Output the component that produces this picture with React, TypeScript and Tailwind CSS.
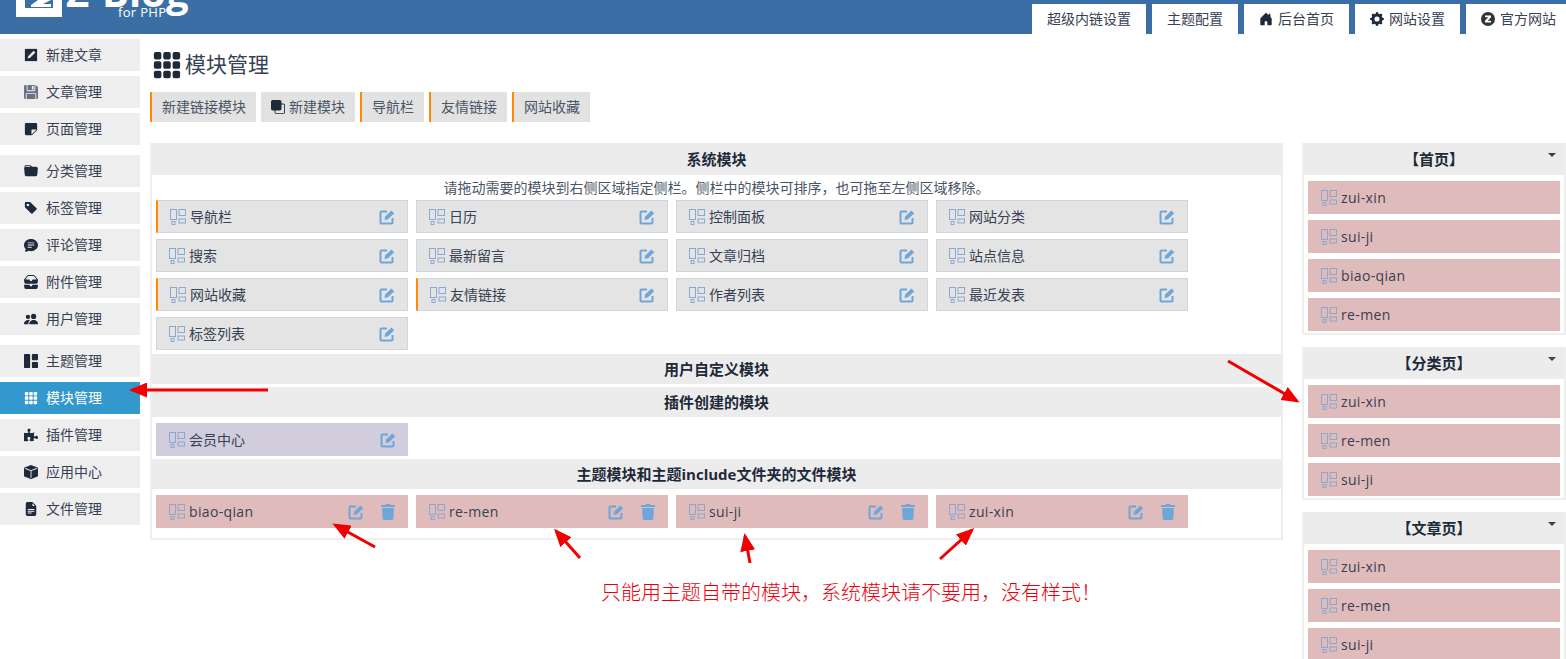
import type { ReactNode } from 'react';
import {
  BsFloppyFill,
  BsStickyFill,
  BsFolderFill,
  BsTagFill,
  BsChatTextFill,
  BsInboxesFill,
  BsPeopleFill,
  BsGrid1X2Fill,
  BsGrid3X3GapFill,
  BsBoxFill,
  BsFileEarmarkTextFill,
  BsHouseDoorFill,
  BsGearFill,
  BsFront,
} from 'react-icons/bs';
import { FaTrash, FaPuzzlePiece } from 'react-icons/fa';

const FONT = { fontFamily: '"Open Sans", "Noto Sans CJK SC", sans-serif' };

type Tone = 'sys' | 'plugin' | 'theme';

// dark square with a white slash, no package has this one
function NewPostIcon() {
  return (
    <svg viewBox="0 0 16 16" className="h-3.5 w-3.5" fill="currentColor">
      <path d="M1 1h14v14H1z" />
      <path d="M4 12l1-3 6-6 2 2-6 6z" fill="#eee" />
    </svg>
  );
}

// open square with a solid pencil
function EditIcon() {
  return (
    <svg viewBox="0 0 16 16" className="h-4 w-4 shrink-0 text-[#6ea6d9]" fill="none">
      <path d="M13.5 9v4.5a1 1 0 0 1-1 1h-10a1 1 0 0 1-1-1v-10a1 1 0 0 1 1-1H8" stroke="currentColor" strokeWidth="2" />
      <path d="M5.5 11l.7-3.4L12.4 1.4l2.8 2.8L9 10.3z" fill="currentColor" />
    </svg>
  );
}

const sideGroups: { label: string; icon: ReactNode; active?: boolean; gray?: boolean }[][] = [
  [
    { label: '新建文章', icon: <NewPostIcon /> },
    { label: '文章管理', icon: <BsFloppyFill />, gray: true },
    { label: '页面管理', icon: <BsStickyFill /> },
  ],
  [
    { label: '分类管理', icon: <BsFolderFill /> },
    { label: '标签管理', icon: <BsTagFill /> },
    { label: '评论管理', icon: <BsChatTextFill /> },
    { label: '附件管理', icon: <BsInboxesFill /> },
    { label: '用户管理', icon: <BsPeopleFill /> },
  ],
  [
    { label: '主题管理', icon: <BsGrid1X2Fill /> },
    { label: '模块管理', icon: <BsGrid3X3GapFill />, active: true },
    { label: '插件管理', icon: <FaPuzzlePiece /> },
    { label: '应用中心', icon: <BsBoxFill /> },
    { label: '文件管理', icon: <BsFileEarmarkTextFill /> },
  ],
];

const systemWidgets: { name: string; accent?: boolean }[] = [
  { name: '导航栏', accent: true },
  { name: '日历' },
  { name: '控制面板' },
  { name: '网站分类' },
  { name: '搜索' },
  { name: '最新留言' },
  { name: '文章归档' },
  { name: '站点信息' },
  { name: '网站收藏', accent: true },
  { name: '友情链接', accent: true },
  { name: '作者列表' },
  { name: '最近发表' },
  { name: '标签列表' },
];

const sidebars = [
  { title: '【首页】', items: ['zui-xin', 'sui-ji', 'biao-qian', 're-men'] },
  { title: '【分类页】', items: ['zui-xin', 're-men', 'sui-ji'] },
  { title: '【文章页】', items: ['zui-xin', 're-men', 'sui-ji'] },
];

// small layout glyph in front of every module name
function ModuleIcon() {
  return (
    <svg viewBox="0 0 16 16" className="h-4 w-4 shrink-0 text-[#8aa8d0]" fill="none" stroke="currentColor" strokeWidth="1">
      <rect x="0.5" y="0.5" width="6" height="10" />
      <rect x="2" y="12.5" width="3" height="3" />
      <rect x="9" y="0.5" width="6.5" height="6" />
      <rect x="9" y="10" width="6.5" height="4" />
    </svg>
  );
}

function Widget({ name, tone = 'sys', accent }: { name: string; tone?: Tone; accent?: boolean }) {
  const toneCls =
    tone === 'theme'
      ? 'bg-[#e0bbbb] pl-3.25 tracking-wide'
      : tone === 'plugin'
        ? 'bg-[#d2cddd] pl-3.25'
        : 'bg-[#e4e4e4] border border-gray-300 pl-3';
  return (
    <div className={`flex h-8.25 items-center pr-3 text-sm text-gray-700 ${toneCls} ${accent ? 'border-l-2 border-l-orange-400' : ''}`}>
      <ModuleIcon />
      <span className="ml-1 flex-1">{name}</span>
      <EditIcon />
      {tone === 'theme' && <FaTrash className="ml-4 text-base text-[#6ea6d9]" />}
    </div>
  );
}

function SectionTitle({ children, tall }: { children: ReactNode; tall?: boolean }) {
  return (
    <div className={`flex items-center justify-center bg-[#ececec] text-[15px] font-bold text-gray-800 ${tall ? 'h-8' : 'h-7.5'}`}>
      {children}
    </div>
  );
}

function ZLogo() {
  return (
    <svg viewBox="0 0 16 16" className="h-3.5 w-3.5">
      <circle cx="8" cy="8" r="8" fill="#333" />
      <path d="M4.5 4h7v2L7.6 10h3.9v2h-7v-2l3.9-4H4.5z" fill="#fff" />
    </svg>
  );
}

const btn = 'flex h-7.5 items-center bg-[#e2e2e2] px-2.5 text-gray-600';
const tab = 'flex h-7.5 items-center bg-white text-gray-700';

export default function App() {
  return (
    <div className="relative flex h-screen flex-col overflow-hidden bg-white text-gray-700" style={FONT}>
      {/* Header, the logo is cut by the top of the window */}
      <header className="flex h-8.5 shrink-0 items-end justify-between overflow-hidden bg-[#3a6ea5] pl-4">
        <div className="flex items-start self-stretch">
          <div className="relative h-4.25 w-11.5 bg-white">
            <svg viewBox="0 0 46 17" className="absolute inset-0 h-full w-full">
              <path d="M9 0h28v8H9z" fill="#3a6ea5" />
              <path d="M22 0h13l-8 4h8v3H15v-2z" fill="#fff" />
            </svg>
          </div>
          <div className="relative ml-1 h-8 w-32 text-white">
            <span className="absolute -top-7 left-0 text-[40px] leading-10 font-bold whitespace-nowrap">Z-Blog</span>
            <span className="absolute top-1 left-13 text-[13px] leading-4 tracking-wide whitespace-nowrap">for PHP</span>
          </div>
        </div>
        <nav className="flex gap-1.5 text-sm">
          <a className={`${tab} px-3.75`}>超级内链设置</a>
          <a className={`${tab} px-3.75`}>主题配置</a>
          <a className={`${tab} gap-1.25 px-3.75`}>
            <BsHouseDoorFill className="text-gray-800" /> 后台首页
          </a>
          <a className={`${tab} gap-1.25 px-3.75`}>
            <BsGearFill className="text-gray-800" /> 网站设置
          </a>
          <a className={`${tab} gap-1.25 pr-2.5 pl-3.75`}>
            <ZLogo /> 官方网站
          </a>
        </nav>
      </header>

      <div className="flex flex-1">
        {/* Left menu */}
        <aside className="flex w-35 shrink-0 flex-col gap-2.5 pt-1.25">
          {sideGroups.map((group, i) => (
            <div key={i} className="flex flex-col gap-1.25">
              {group.map((item) => (
                <div
                  key={item.label}
                  className={`flex h-8 items-center gap-2 pl-6 text-sm ${
                    item.active ? 'bg-[#3399cc] text-white' : 'bg-[#eeeeee] text-gray-700'
                  }`}
                >
                  <span className={`text-sm ${item.active ? 'text-white' : item.gray ? 'text-gray-500' : 'text-gray-800'}`}>{item.icon}</span>
                  {item.label}
                </div>
              ))}
            </div>
          ))}
        </aside>

        {/* Main content */}
        <main className="min-w-0 flex-1 pl-2.5">
          <h1 className="mt-3.75 flex h-8 items-center gap-0.75 pl-0.5 text-[21px] font-normal text-gray-700">
            <BsGrid3X3GapFill className="text-3xl text-gray-800" /> 模块管理
          </h1>
          <div className="mt-2.75 flex gap-1.25 text-sm">
            <span className={`${btn} border-l-2 border-l-orange-400`}>新建链接模块</span>
            <span className={`${btn} gap-1`}>
              <BsFront className="text-gray-800" /> 新建模块
            </span>
            <span className={`${btn} border-l-2 border-l-orange-400`}>导航栏</span>
            <span className={`${btn} border-l-2 border-l-orange-400`}>友情链接</span>
            <span className={`${btn} border-l-2 border-l-orange-400`}>网站收藏</span>
          </div>

          <div className="mt-5.25 flex items-start justify-between">
            {/* Widget list */}
            <section className="flex w-[1133px] flex-col border-x-2 border-b-2 border-[#eeeeee] pb-2.5">
              <SectionTitle tall>系统模块</SectionTitle>
              <p className="h-6.25 text-center text-sm leading-6.25 text-gray-600">请拖动需要的模块到右侧区域指定侧栏。侧栏中的模块可排序，也可拖至左侧区域移除。</p>
              <div className="grid grid-cols-[repeat(4,252px)] gap-x-2 gap-y-1.5 pl-1">
                {systemWidgets.map((w) => (
                  <Widget key={w.name} name={w.name} accent={w.accent} />
                ))}
              </div>
              <div className="mt-1"><SectionTitle>用户自定义模块</SectionTitle></div>
              <div className="mt-0.75"><SectionTitle>插件创建的模块</SectionTitle></div>
              <div className="grid grid-cols-[repeat(4,252px)] gap-x-2 pt-1.5 pb-0.75 pl-1">
                <Widget name="会员中心" tone="plugin" />
              </div>
              <SectionTitle>主题模块和主题include文件夹的文件模块</SectionTitle>
              <div className="grid grid-cols-[repeat(4,252px)] gap-x-2 pt-1.5 pl-1">
                {['biao-qian', 're-men', 'sui-ji', 'zui-xin'].map((n) => (
                  <Widget key={n} name={n} tone="theme" />
                ))}
              </div>
            </section>

            {/* Sidebars on the right */}
            <aside className="flex w-66 shrink-0 flex-col gap-3">
              {sidebars.map((s) => (
                <div key={s.title} className="relative border-x-2 border-b-2 border-[#eeeeee] pb-0.5">
                  <SectionTitle tall>{s.title}</SectionTitle>
                  <span className="absolute top-2.5 right-2 border-x-4 border-t-4 border-x-transparent border-t-gray-700" />
                  <div className="flex flex-col gap-1.5 px-1 pt-1.5">
                    {s.items.map((n) => (
                      <div key={n} className="flex h-8.25 items-center gap-1 bg-[#e0bbbb] pl-3.25 text-sm tracking-wide">
                        <ModuleIcon />
                        {n}
                      </div>
                    ))}
                  </div>
                </div>
              ))}
            </aside>
          </div>
        </main>
      </div>

      {/* Red annotation text and arrows drawn over the page */}
      <p
        className="absolute top-[578px] left-[601px] text-xl font-light whitespace-nowrap text-red-600"
        style={{ fontFamily: '"Noto Sans CJK SC", serif' }}
      >
        只能用主题自带的模块，系统模块请不要用，没有样式！
      </p>
      <svg className="pointer-events-none absolute inset-0 h-full w-full" viewBox="0 0 1566 659">
        <defs>
          <marker id="head" markerWidth="6" markerHeight="5" refX="5" refY="2.5" orient="auto">
            <path d="M0 0L6 2.5L0 5z" fill="#f00000" />
          </marker>
        </defs>
        {[
          [268, 390, 132, 390],
          [1228, 361, 1297, 401],
          [375, 547, 335, 525],
          [580, 558, 556, 531],
          [750, 563, 745, 536],
          [940, 559, 972, 530],
        ].map(([x1, y1, x2, y2], i) => (
          <line key={i} x1={x1} y1={y1} x2={x2} y2={y2} stroke="#f00000" strokeWidth="3" markerEnd="url(#head)" />
        ))}
      </svg>
    </div>
  );
}
